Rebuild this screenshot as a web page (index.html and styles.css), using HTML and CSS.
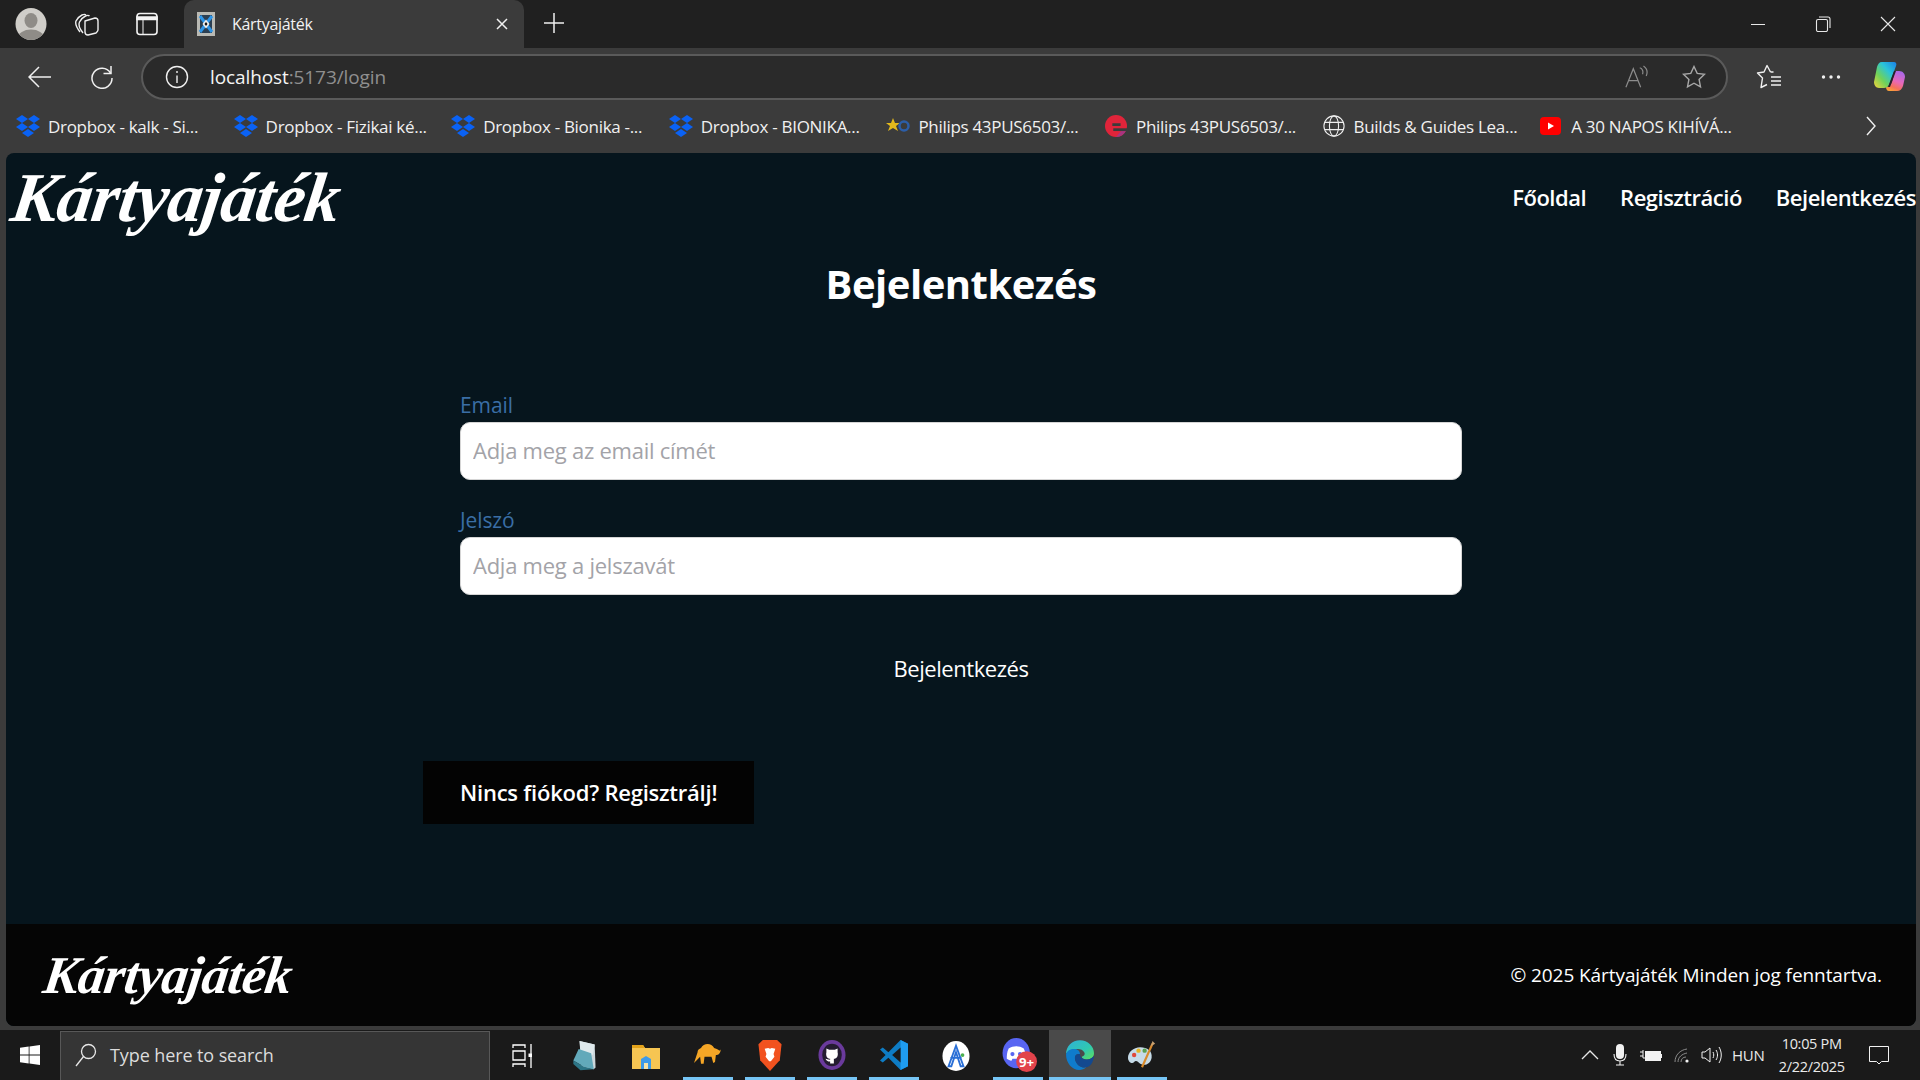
FILE: index.html
```html
<!DOCTYPE html>
<html lang="hu">
<head>
<meta charset="utf-8">
<title>Kártyajáték</title>
<link rel="stylesheet" href="styles.css">
</head>
<body>
<div class="screen">
  <div class="tabstrip">
    <div class="strip-left">
      <svg class="avatar" viewBox="0 0 32 32"><defs><clipPath id="av"><ellipse cx="16" cy="16" rx="15.500" ry="16"/></clipPath></defs><ellipse cx="16" cy="16" rx="15.500" ry="16" fill="#d0cec9"/><g clip-path="url(#av)" fill="#8f8c87"><ellipse cx="16" cy="12.500" rx="6.500" ry="7.500"/><ellipse cx="16" cy="30" rx="13" ry="8.500"/></g></svg>
      <svg class="ic-collections" viewBox="0 0 26 24" fill="none" stroke="#efefef" stroke-width="1.400" stroke-linejoin="round"><path d="M6 20C2 15 1 12 2 9c1-2 4-5 6-6 2-1 3-1 4 0"/><path d="M9 21C5 16 4 13 5.500 10c1-2 4-5 6-6 2-1 3-1 4 0"/><path d="M11 9l10-3c2 0 3 1 3 3v9c0 1-1 2-2 3l-8 2c-2 0-3-1-3-3V11c0-1 0-2 0-2z"/></svg>
      <svg class="ic-tabs" viewBox="0 0 22 24" fill="none" stroke="#f4f4f4" stroke-width="1.600"><rect x="1" y="1.500" width="20" height="21" rx="3"/><path d="M1 5h20v2.500H1z" fill="#f4f4f4"/><path d="M7 8v14" stroke-width="1"/></svg>
    </div>
    <div class="tab">
      <svg class="favicon" viewBox="0 0 18 24"><rect width="18" height="24" fill="#b9b9b3"/><rect x="3" y="3" width="12" height="18" fill="#2b3f52"/><path d="M3 4l12 16M15 4L3 20" stroke="#2d95e8" stroke-width="3"/><path d="M9 7.500l3.500 4.500L9 16.500 5.500 12z" fill="#f0f0f0"/><path d="M9 10l1.500 2L9 14l-1.500-2z" fill="#111"/></svg>
      <span class="tab-title">Kártyajáték</span>
      <svg class="tab-close" viewBox="0 0 12 12" stroke="#f0f0f0" stroke-width="1.500"><path d="M1 1l10 10M11 1L1 11"/></svg>
    </div>
    <svg class="ic-plus" viewBox="0 0 20 20" stroke="#f0f0f0" stroke-width="1.500"><path d="M10 0v20M0 10h20"/></svg>
    <div class="win-controls">
      <svg class="win-ic" viewBox="0 0 16 16" stroke="#e8e8e8" stroke-width="1"><path d="M1 8.500h14"/></svg>
      <svg class="win-ic" viewBox="0 0 16 16" fill="none" stroke="#e8e8e8" stroke-width="1.100"><rect x="1.500" y="3.500" width="11" height="12" rx="1.500"/><path d="M4 1h9c1 0 2 1 2 2v9"/></svg>
      <svg class="win-ic" viewBox="0 0 16 16" stroke="#e8e8e8" stroke-width="1.100"><path d="M1 1l14 14M15 1L1 15"/></svg>
    </div>
  </div>

  <div class="toolbar">
    <svg class="ic-back" viewBox="0 0 24 22" fill="none" stroke="#f0f0f0" stroke-width="1.500"><path d="M23 11H1M11 1L1 11l10 10"/></svg>
    <svg class="ic-refresh" viewBox="0 0 24 24" fill="none" stroke="#f0f0f0" stroke-width="1.500"><path d="M20.500 8A10 10 0 1 0 22 13"/><path d="M21 1v7.500h-7.500"/></svg>
    <div class="addressbar">
      <svg class="ic-info" viewBox="0 0 24 24" fill="none" stroke="#f0f0f0" stroke-width="1.400"><circle cx="12" cy="12" r="10.500"/><path d="M12 10.500V18M12 6v2"/></svg>
      <span class="url"><span class="url-host">localhost</span>:5173/login</span>
      <svg class="ic-read" viewBox="0 0 26 24" fill="none" stroke="#8c8c8c" stroke-width="1.300"><path d="M1 23L9 3l8 20M4 16h10"/><path d="M16 2c3 1 4 4 3 7M20 0c3 2 5 6 3 11"/></svg>
      <svg class="ic-star" viewBox="0 0 24 24" fill="none" stroke="#a8a8a8" stroke-width="1.400"><path d="M12 1.500l3.200 6.900 7.300.9-5.400 5.100 1.400 7.400L12 18.200l-6.500 3.600 1.400-7.400L1.500 9.300l7.300-.9z"/></svg>
    </div>
    <svg class="ic-fav" viewBox="0 0 26 26" fill="none" stroke="#f0f0f0" stroke-width="1.400" stroke-linejoin="round"><path d="M14.500 8L11 1.500 8 8l-6.500 1 5 5-1.500 9.500L11 20.500M14.500 8h3"/><path d="M15 13h10M15 17h10M15 21h10"/></svg>
    <svg class="ic-dots" viewBox="0 0 20 4" fill="#f0f0f0"><circle cx="2.500" cy="2" r="1.700"/><circle cx="10" cy="2" r="1.700"/><circle cx="17.500" cy="2" r="1.700"/></svg>
    <svg class="ic-copilot" viewBox="0 0 31 29"><defs><linearGradient id="cpa" x1="1" y1="0" x2="0" y2="1"><stop offset="0" stop-color="#1a7fe8"/><stop offset=".35" stop-color="#2bc4d8"/><stop offset=".65" stop-color="#6fd25a"/><stop offset="1" stop-color="#f5d33a"/></linearGradient><linearGradient id="cpb" x1="0.700" y1="0" x2="0.300" y2="1"><stop offset="0" stop-color="#a868ea"/><stop offset=".5" stop-color="#e868b8"/><stop offset=".8" stop-color="#f5705a"/><stop offset="1" stop-color="#f9a03a"/></linearGradient></defs><path d="M21 9h4c4 0 6 3 6 6l-2 9c-1 3-3 5-6 5h-8c-2 0-3-2-3-4 3 0 5-2 6-5z" fill="url(#cpb)"/><path d="M8 0h12c2 0 3 2 2 4l-7 19c-1 2-3 3-5 3H5c-3 0-5-3-5-6L3 5C4 2 5 0 8 0z" fill="url(#cpa)"/><path d="M20 9l-6 16h2l6-16z" fill="#26222c"/></svg>
  </div>

  <div class="bookmarks">
    <div class="bm"><svg class="bm-ic" viewBox="0 0 24 22"><use href="#dbx"/></svg><span>Dropbox - kalk - Si...</span></div>
    <div class="bm"><svg class="bm-ic" viewBox="0 0 24 22"><use href="#dbx"/></svg><span>Dropbox - Fizikai ké...</span></div>
    <div class="bm"><svg class="bm-ic" viewBox="0 0 24 22"><use href="#dbx"/></svg><span>Dropbox - Bionika -...</span></div>
    <div class="bm"><svg class="bm-ic" viewBox="0 0 24 22"><use href="#dbx"/></svg><span>Dropbox - BIONIKA...</span></div>
    <div class="bm"><svg class="bm-ic" viewBox="0 0 24 22"><path d="M7 3l2 5 5 0-4 3 2 5-5-3-5 3 2-5-4-3 5 0z" fill="#e3b91c"/><circle cx="18" cy="11" r="4.500" fill="none" stroke="#2c5ea8" stroke-width="2.500"/></svg><span>Philips 43PUS6503/...</span></div>
    <div class="bm"><svg class="bm-ic" viewBox="0 0 24 24"><circle cx="12" cy="12" r="12" fill="#e0243a"/><path d="M12 24a12 12 0 0 0 11-7h-5z" fill="#a8347f"/><path d="M8 10.500h9" stroke="#3b3b3b" stroke-width="3"/><path d="M24 16H9" stroke="#3b3b3b" stroke-width="3"/></svg><span>Philips 43PUS6503/...</span></div>
    <div class="bm"><svg class="bm-ic" viewBox="0 0 24 24" fill="none" stroke="#eee" stroke-width="1.200"><circle cx="12" cy="12" r="11"/><ellipse cx="12" cy="12" rx="5" ry="11"/><path d="M2 8h20M2 16h20"/></svg><span>Builds &amp; Guides Lea...</span></div>
    <div class="bm"><svg class="bm-ic" viewBox="0 0 24 20"><rect x="1" y="1" width="21" height="18" rx="4" fill="#f00"/><path d="M9 6.500l6 3.500-6 3.500z" fill="#fff"/></svg><span>A 30 NAPOS KIHÍVÁ...</span></div>
    <svg class="bm-more" viewBox="0 0 10 20" fill="none" stroke="#f0f0f0" stroke-width="1.400"><path d="M1 1l8 9-8 9"/></svg>
    <svg class="sprite" width="0" height="0"><defs><g id="dbx" fill="#0a62f5"><path d="M6 0l6 4-6 4-6-4zM18 0l6 4-6 4-6-4zM6 8l6 4-6 4-6-4zM18 8l6 4-6 4-6-4zM12 14l6 4-6 4-6-4z"/></g></defs></svg>
  </div>

  <div class="viewport">
    <div class="page">
      <header class="site-header">
        <span class="logo">Kártyajáték</span>
        <nav class="nav">
          <a class="nav-link">Főoldal</a>
          <a class="nav-link">Regisztráció</a>
          <a class="nav-link">Bejelentkezés</a>
        </nav>
      </header>
      <main class="main">
        <h1 class="title">Bejelentkezés</h1>
        <div class="panel">
          <form class="form">
            <label class="label">Email</label>
            <input class="input" type="email" placeholder="Adja meg az email címét">
            <label class="label label-second">Jelszó</label>
            <input class="input" type="password" placeholder="Adja meg a jelszavát">
            <button class="submit" type="button">Bejelentkezés</button>
          </form>
          <a class="register">Nincs fiókod? Regisztrálj!</a>
        </div>
      </main>
      <footer class="site-footer">
        <span class="logo logo-small">Kártyajáték</span>
        <span class="copyright">© 2025 Kártyajáték Minden jog fenntartva.</span>
      </footer>
    </div>
  </div>

  <div class="taskbar">
    <div class="start"><svg class="ic-win" viewBox="0 0 20 20" fill="#fff"><path d="M0 2.800l8.700-1.200v8H0zM9.500 1.400L20 0v9.600H9.500zM0 10.400h8.700v8L0 17.200zM9.500 10.400H20V20L9.500 18.600z"/></svg></div>
    <div class="search">
      <svg class="ic-search" viewBox="0 0 22 24" fill="none" stroke="#e8e8e8" stroke-width="1.300"><circle cx="13.500" cy="8.500" r="7"/><path d="M8.500 13.500L1 23"/></svg>
      <span>Type here to search</span>
    </div>
    <div class="apps">
      <div class="slot"><div class="slot-in"><svg class="app-small" viewBox="0 0 20 24" fill="none" stroke="#fff" stroke-width="1.300"><path d="M1 4V1h12v3M1 7h12v9H1zM1 23v-3h12v3M19 0v24"/><rect x="16.500" y="9.500" width="3.500" height="3.500" fill="#fff" stroke="none"/></svg></div></div>
      <div class="slot"><div class="slot-in"><svg class="app" viewBox="0 0 28 36"><path d="M9 1l17 4 1 26-2 2L11 30z" fill="#ccd7dc"/><path d="M9 1l17 4-2 12-14-4z" fill="#dfe9ec"/><path d="M8 10l14 5 3 18-11-3-12-7z" fill="#62a9ba"/><path d="M2 23l12 7 11 3-15 1-8-7z" fill="#2d7586"/></svg></div></div>
      <div class="slot"><div class="slot-in"><svg class="app" viewBox="0 0 28 28"><path d="M0 3h11l2 3h15v21H0z" fill="#f6c552"/><path d="M0 3h11l2 3H0z" fill="#e3a21a"/><path d="M9 27V17l5-3 5 3v10z" fill="#3d9be9"/><path d="M12 27v-6h4v6z" fill="#f6e3a8"/></svg></div></div>
      <div class="slot"><div class="slot-in running"><svg class="app" viewBox="0 0 32 30"><path d="M8 7c3-6 12-6 15 0l3 1c3 1 4 4 5-1-1 7-3 8-6 8l-1 8-2 1-2-7h-8l-1 8H8l-1-8-7 7 4-12c0-3 2-4 4-5z" fill="#f5a626"/></svg></div></div>
      <div class="slot"><div class="slot-in running"><svg class="app" viewBox="0 0 28 36"><path d="M6 1h16l5 5-2 18-11 12L3 24 1 6z" fill="#f2521f"/><path d="M8 11l4-1 2 1 2-1 4 1-2 6 1 3-4 5h-2l-4-5 1-3z" fill="#fff"/></svg></div></div>
      <div class="slot"><div class="slot-in running"><svg class="app" viewBox="0 0 30 32"><ellipse cx="15" cy="16" rx="14.500" ry="16" fill="#6a3a9c"/><ellipse cx="15" cy="16" rx="10.500" ry="12" fill="#241c31"/><path d="M9 9l3 1.500h6L21 9v4c1 4-1 7-4 7v5h-4v-2c-3 0-4-1-5-3 2 0 2 1 5 1v-1c-3 0-5-3-4-7z" fill="#fff"/></svg></div></div>
      <div class="slot"><div class="slot-in running"><svg class="app" viewBox="0 0 30 32"><path d="M22 0l8 4v24l-8 4L9 19l-6 5-3-2 6-6-6-6 3-2 6 5z" fill="#0e7cc4"/><path d="M22 0l8 4v24l-8 4z" fill="#1f9cf0"/><path d="M22 8l-9 8 9 8z" fill="#1a1a1a"/></svg></div></div>
      <div class="slot"><div class="slot-in"><svg class="app" viewBox="0 0 30 32"><ellipse cx="15" cy="16" rx="14.500" ry="16" fill="#fff"/><path d="M15 5l-8 22h3l5-15 5 15h3zM9 18h12" fill="none" stroke="#2a6fd6" stroke-width="2"/><circle cx="22" cy="15" r="2" fill="#4caf50"/></svg></div></div>
      <div class="slot"><div class="slot-in running"><svg class="app app-over" viewBox="0 0 38 36"><ellipse cx="15" cy="16" rx="14.500" ry="16" fill="#5865f2"/><path d="M7 11c5-3 11-3 16 0 2 4 2 8 2 11-2 1-3 2-5 2l-1-2H11l-1 2c-2 0-3-1-5-2 0-3 0-7 2-11z" fill="#fff"/><circle cx="11" cy="17" r="2.200" fill="#5865f2"/><circle cx="19" cy="17" r="2.200" fill="#5865f2"/><circle cx="26" cy="25" r="11" fill="#e2434b"/><text class="badge-text" x="26" y="30.500">9+</text></svg></div></div>
      <div class="slot slot-active"><div class="slot-in running"><svg class="app" viewBox="0 0 32 34"><defs><linearGradient id="eg" x1="0" y1="0" x2="1" y2="1"><stop offset="0" stop-color="#2fb0d9"/><stop offset=".6" stop-color="#30c9b0"/><stop offset="1" stop-color="#5fe05a"/></linearGradient></defs><path d="M16 0c9 0 16 7 16 15 0 4-3 7-8 7-3 0-6-1-6-3 3-1 4-3 3-5-2-4-8-5-12-3C4 12 0 15 0 16 0 7 7 0 16 0z" fill="url(#eg)"/><path d="M0 16c1-4 5-6 9-6 4 0 7 2 7 6-5-1-7 3-5 8 2 5 7 8 12 7-2 2-5 3-8 3C7 34 0 26 0 16z" fill="#0f7ccc"/><path d="M11 24c-2-5 0-9 5-8 0 4 4 6 8 6 3 0 6-2 8-4-1 8-4 12-9 13-5 1-10-2-12-7z" fill="#13498f"/></svg></div></div>
      <div class="slot"><div class="slot-in running"><svg class="app" viewBox="0 0 32 32"><path d="M14 7C6 7 0 13 0 19c0 5 5 8 7 5 2-3 5 0 7 2 5 3 12 0 13-7 1-8-5-12-13-12z" fill="#c6dbe8"/><circle cx="7" cy="16" r="2.500" fill="#e0483a"/><circle cx="12" cy="11" r="2.500" fill="#e6b422"/><circle cx="19" cy="11" r="2.500" fill="#59a14f"/><path d="M16 30L28 3" stroke="#d98a2b" stroke-width="2.500"/><path d="M26 6l2-6 3 3z" fill="#c8a070"/></svg></div></div>
    </div>
    <div class="tray">
      <svg class="tr-chev" viewBox="0 0 18 10" fill="none" stroke="#e8e8e8" stroke-width="1.300"><path d="M1 9l8-8 8 8"/></svg>
      <svg class="tr-mic" viewBox="0 0 14 22"><rect x="3" y="0" width="8" height="15" rx="4" fill="#f2f2f2"/><path d="M1 10c0 4 2 7 6 7s6-3 6-7M7 17v4M3 21h8" fill="none" stroke="#f2f2f2" stroke-width="1.100"/></svg>
      <svg class="tr-bat" viewBox="0 0 22 14"><path d="M0 4h3M0 8h3M3 2v8h3" stroke="#f2f2f2" fill="none"/><rect x="5.500" y="3.500" width="15" height="9" fill="#f2f2f2" stroke="#f2f2f2"/><rect x="20.500" y="6" width="1.500" height="4" fill="#f2f2f2"/></svg>
      <svg class="tr-wifi" viewBox="0 0 16 15" fill="none" stroke="#8b8b8b" stroke-width="1"><path d="M1 14C1 7 6 2 13 1M4 14c0-5 4-8 9-9M7 14c0-3 2-5 5-5"/><circle cx="13" cy="13" r="1.600" fill="#f2f2f2" stroke="none"/></svg>
      <svg class="tr-vol" viewBox="0 0 21 18" fill="none" stroke="#f2f2f2" stroke-width="1"><path d="M1 6h3l5-4v14l-5-4H1zM12 6c1 2 1 4 0 6M15 4c2 3 2 7 0 10M18 1c3 5 3 11 0 16"/></svg>
      <span class="tr-lang">HUN</span>
      <div class="tr-clock"><span>10:05 PM</span><span>2/22/2025</span></div>
      <svg class="tr-note" viewBox="0 0 20 19" fill="none" stroke="#f2f2f2" stroke-width="1"><path d="M.5.500h19v15h-7l-2.500 2.500L7.500 15.500h-7z"/></svg>
    </div>
  </div>
</div>
</body>
</html>
```

FILE: styles.css
```css
* { box-sizing: border-box; }
html, body { margin: 0; height: 100%; overflow: hidden; background: #1b1b1b; }
body { font-family: "Open Sans", "Noto Sans", sans-serif; color: #fff; }
svg { display: block; flex: none; }
.sprite { position: absolute; }

.screen { display: flex; flex-direction: column; width: 1920px; height: 1080px; }

/* Tab strip */
.tabstrip { display: flex; align-items: flex-end; height: 48px; background: #202020; flex: none; }
.strip-left { display: flex; align-items: center; height: 48px; width: 184px; padding-left: 15px; }
.avatar { width: 32px; height: 32px; }
.ic-collections { width: 26px; height: 24px; margin-left: 27px; }
.ic-tabs { width: 22px; height: 24px; margin-left: 36px; }
.tab { display: flex; align-items: center; width: 340px; height: 48px; background: #3b3b3b; border-radius: 10px 10px 0 0; padding: 0 16px 0 13px; }
.favicon { width: 18px; height: 24px; }
.tab-title { margin-left: 17px; font-size: 16px; letter-spacing: -.3px; flex: 1; color: #f2f2f2; }
.tab-close { width: 12px; height: 12px; }
.ic-plus { width: 20px; height: 20px; margin: 0 0 15px 20px; }
.win-controls { display: flex; margin-left: auto; height: 48px; align-items: center; gap: 49px; padding-right: 24px; }
.win-ic { width: 16px; height: 16px; }

/* Toolbar */
.toolbar { display: flex; align-items: center; height: 57px; background: #3b3b3b; padding: 0 0 0 28px; flex: none; }
.ic-back { width: 24px; height: 22px; }
.ic-refresh { width: 24px; height: 24px; margin-left: 38px; }
.addressbar { display: flex; align-items: center; width: 1587px; height: 46px; margin-left: 27px; padding: 0 20px 0 22px; background: #2a2a2a; border: 2px solid #5a5a5a; border-radius: 23px; }
.ic-info { width: 24px; height: 24px; }
.url { margin-left: 21px; font-size: 19px; letter-spacing: -.1px; color: #8f8f8f; flex: 1; }
.url-host { color: #f4f4f4; }
.ic-read { width: 24px; height: 24px; margin-right: 33px; }
.ic-star { width: 24px; height: 24px; }
.ic-fav { width: 26px; height: 26px; margin-left: 28px; }
.ic-dots { width: 20px; height: 4px; margin-left: 39px; }
.ic-copilot { width: 31px; height: 29px; margin-left: 33px; }

/* Bookmarks */
.bookmarks { display: flex; align-items: center; height: 48px; background: #3b3b3b; padding: 0 0 6px 16px; flex: none; }
.bm { display: flex; align-items: center; width: 217.6px; font-size: 17px; letter-spacing: -.3px; color: #f0f0f0; white-space: nowrap; }
.bm-ic { width: 24px; height: 22px; margin-right: 8px; }
.bm-more { width: 10px; height: 20px; margin-left: 109px; }

/* Browser viewport */
.viewport { flex: 1; min-height: 0; background: #3b3b3b; padding: 0 4px 4px 6px; }
.page { display: flex; flex-direction: column; height: 100%; background: #06151d; border-radius: 8px; overflow: hidden; }

.site-header { display: flex; justify-content: space-between; align-items: flex-start; height: 90px; }
.logo { font-family: "Liberation Serif", serif; font-style: italic; font-weight: 700; color: #fff; font-size: 70px; line-height: 62px; letter-spacing: -.6px; margin: 14px 0 0 6px; transform: skewX(-8deg); }
.nav { display: flex; gap: 34px; margin-top: 29px; }
.nav-link { font-size: 22px; font-weight: 600; line-height: 30px; letter-spacing: -.5px; color: #fff; }

.main { flex: 1; display: flex; flex-direction: column; align-items: center; }
.title { font-size: 40px; font-weight: 700; line-height: 54px; margin: 14px 0 0; letter-spacing: -.5px; }
.panel { width: 1076px; margin-top: 80px; }
.form { display: flex; flex-direction: column; padding: 0 37px; }
.label { font-size: 21px; line-height: 28px; color: #3a6ea5; letter-spacing: -.1px; margin-bottom: 3px; }
.label-second { margin-top: 26px; }
.input { height: 58px; border: 1px solid #d5d5d5; border-radius: 10px; background: #fff; padding: 0 12px 2px; font: inherit; font-size: 22px; letter-spacing: -.25px; outline: none; }
.input::placeholder { color: #a3a3a8; opacity: 1; }
.submit { align-self: center; margin-top: 55px; background: none; border: 0; color: #fff; font: inherit; font-size: 22px; line-height: 36px; letter-spacing: -.45px; padding: 0; }
.register { display: inline-block; margin-top: 75px; padding: 0 37px; height: 63px; line-height: 63px; background: #030303; color: #fff; font-size: 22px; font-weight: 600; letter-spacing: -.23px; }

.site-footer { display: flex; justify-content: space-between; align-items: center; height: 102px; padding: 0 34px 0 38px; background: #050505; flex: none; }
.logo-small { font-size: 53px; line-height: 50px; margin: 0; letter-spacing: -.5px; }
.copyright { font-size: 19px; letter-spacing: -.08px; }

/* Taskbar */
.taskbar { display: flex; height: 50px; background: #1a1a1a; flex: none; }
.start { display: flex; align-items: center; justify-content: center; width: 60px; }
.ic-win { width: 20px; height: 20px; }
.search { display: flex; align-items: center; width: 430px; background: #353535; border: 1px solid #585858; border-bottom: 0; padding: 0 0 2px 14px; margin-top: 1px; font-size: 18px; letter-spacing: -.1px; color: #dcdcdc; }
.ic-search { width: 22px; height: 24px; margin-right: 13px; }
.apps { display: flex; margin-left: 1px; }
.slot { width: 62px; padding: 0 6px; }
.slot-in { display: flex; align-items: center; justify-content: center; height: 50px; padding-top: 1px; }
.running { border-bottom: 3px solid #76c5f5; padding-top: 3px; }
.slot-active { padding: 0; background: #4a4a4a; }
.app { width: 28px; height: 32px; }
.app-small { width: 20px; height: 24px; }
.app-over { width: 36px; height: 34px; margin-left: 4px; }
.badge-text { font: 700 14px "Open Sans", sans-serif; fill: #fff; text-anchor: middle; }

.tray { display: flex; align-items: center; flex: 1; padding-left: 12px; font-size: 16px; color: #eaeaea; }
.tr-chev { width: 18px; height: 10px; margin-left: 396px; }
.tr-mic { width: 14px; height: 22px; margin-left: 14px; }
.tr-bat { width: 22px; height: 14px; margin-left: 13px; }
.tr-wifi { width: 16px; height: 15px; margin-left: 12px; }
.tr-vol { width: 21px; height: 18px; margin-left: 11px; }
.tr-lang { margin-left: 10px; font-size: 15px; letter-spacing: -.2px; }
.tr-clock { display: flex; flex-direction: column; align-items: center; width: 70px; margin-left: 12px; font-size: 14.500px; line-height: 23px; letter-spacing: -.3px; }
.tr-note { width: 20px; height: 19px; margin-left: 22px; }
```
